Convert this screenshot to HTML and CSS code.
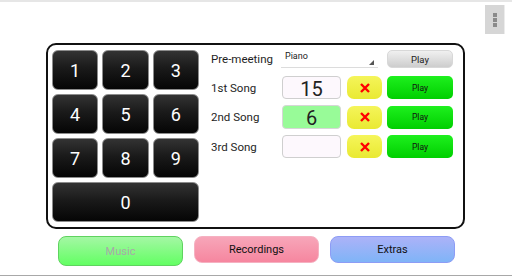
FILE: index.html
```html
<!DOCTYPE html>
<html lang="en">
<head>
  <meta charset="UTF-8">
  <meta name="viewport" content="width=device-width, initial-scale=1.0">
  <title>Meeting Music</title>
  <link rel="stylesheet" href="styles.css">
</head>
<body>
  <div class="screen">
    <div class="top-bar">
      <div class="menu-btn">
        <span></span><span></span><span></span>
      </div>
    </div>

    <div class="panel">
      <div class="keypad">
        <button class="key">1</button>
        <button class="key">2</button>
        <button class="key">3</button>
        <button class="key">4</button>
        <button class="key">5</button>
        <button class="key">6</button>
        <button class="key">7</button>
        <button class="key">8</button>
        <button class="key">9</button>
        <button class="key key-zero">0</button>
      </div>

      <div class="songs">
        <div class="row row-pre">
          <span class="label">Pre-meeting</span>
          <div class="spinner">Piano</div>
          <button class="play play-gray">Play</button>
        </div>
        <div class="row row-1">
          <span class="label">1st Song</span>
          <div class="song-input">15</div>
          <button class="clear"><svg width="10" height="10" viewBox="0 0 10 10"><path d="M1 1L9 9M9 1L1 9" stroke="#f00" stroke-width="2.4"/></svg></button>
          <button class="play">Play</button>
        </div>
        <div class="row row-2">
          <span class="label">2nd Song</span>
          <div class="song-input selected">6</div>
          <button class="clear"><svg width="10" height="10" viewBox="0 0 10 10"><path d="M1 1L9 9M9 1L1 9" stroke="#f00" stroke-width="2.4"/></svg></button>
          <button class="play">Play</button>
        </div>
        <div class="row row-3">
          <span class="label">3rd Song</span>
          <div class="song-input"></div>
          <button class="clear"><svg width="10" height="10" viewBox="0 0 10 10"><path d="M1 1L9 9M9 1L1 9" stroke="#f00" stroke-width="2.4"/></svg></button>
          <button class="play">Play</button>
        </div>
      </div>
    </div>

    <div class="tabs">
      <button class="tab tab-music">Music</button>
      <button class="tab tab-rec">Recordings</button>
      <button class="tab tab-extras">Extras</button>
    </div>
  </div>
</body>
</html>
```

FILE: styles.css
```css
body {
  margin: 0;
  padding: 0;
  font-family: Roboto, "Liberation Sans", sans-serif;
  background-color: #fff;
}
button {
  font-family: Roboto, "Liberation Sans", sans-serif;
  padding: 0;
  cursor: pointer;
}
.screen {
  width: 512px;
  height: 276px;
  box-sizing: border-box;
  border-top: 2px solid #e6e6e6;
  border-bottom: 1px solid #a8a8a8;
  display: flex;
  flex-direction: column;
}
.top-bar {
  height: 41px;
  display: flex;
  justify-content: flex-end;
  align-items: flex-start;
}
.menu-btn {
  width: 19px;
  height: 29px;
  margin-top: 3px;
  margin-right: 7px;
  background-color: #d6d6d6;
  border-right: 1px solid #ececec;
  display: flex;
  flex-direction: column;
  align-items: center;
  justify-content: center;
  gap: 1px;
}
.menu-btn span {
  width: 4px;
  height: 4px;
  background-color: #8a8a8a;
}
/* main panel */
.panel {
  width: 419px;
  height: 186px;
  margin-left: 46px;
  box-sizing: border-box;
  border: 2px solid #111;
  border-radius: 10px;
  padding: 5px 6px 0 4px;
  display: flex;
}
.keypad {
  width: 147px;
  flex-shrink: 0;
  display: grid;
  grid-template-columns: repeat(3, 1fr);
  grid-template-rows: repeat(4, 40px);
  column-gap: 4px;
  row-gap: 4px;
}
.key {
  background: linear-gradient(#333 0%, #1a1a1a 45%, #050505 100%);
  border: 1px solid #8c8c8c;
  border-radius: 6px;
  color: #fff;
  font-size: 18px;
}
.key-zero {
  grid-column: 1 / 4;
}
.songs {
  margin-left: 12px;
  flex: 1;
}
.row {
  display: flex;
  align-items: center;
}
.row-pre {
  height: 18px;
}
.row-1 {
  height: 23px;
  margin-top: 8px;
}
.row-2 {
  height: 24px;
  margin-top: 6px;
}
.row-3 {
  height: 23px;
  margin-top: 6px;
}
.label {
  width: 71px;
  flex-shrink: 0;
  font-size: 11.5px;
  color: #1e1e1e;
}
.spinner {
  width: 97px;
  height: 18px;
  margin-left: -1px;
  margin-right: 4px;
  box-sizing: border-box;
  padding: 1px 0 0 4px;
  font-size: 9px;
  color: #222;
  border-bottom: 1px solid #dcdcdc;
  position: relative;
}
.spinner::after {
  content: "";
  position: absolute;
  right: 4px;
  bottom: 2px;
  border-left: 5px solid transparent;
  border-bottom: 5px solid #555;
}
.song-input {
  width: 59px;
  height: 100%;
  box-sizing: border-box;
  border: 1px solid #cfcfcf;
  border-radius: 4px;
  background-color: #fdf8fd;
  font-size: 20px;
  color: #222;
  text-align: center;
  line-height: 24px;
}
.song-input.selected {
  background-color: #98fb98;
  border-color: #d6d6d6;
}
.clear {
  width: 35px;
  height: 23px;
  margin-left: 6px;
  border: none;
  border-radius: 7px;
  background: linear-gradient(#f5f55a, #e9e932);
  display: flex;
  align-items: center;
  justify-content: center;
}
.play {
  width: 66px;
  height: 23px;
  margin-left: 5px;
  border: none;
  border-radius: 5px;
  background: linear-gradient(#1ef01e, #00cf00);
  color: #111;
  font-size: 8.5px;
}
.play-gray {
  height: 18px;
  background: linear-gradient(#f0f0f0, #cdcdcd);
  border: 1px solid #d8d8d8;
  font-size: 9.5px;
  color: #222;
}
/* bottom tabs */
.tabs {
  display: flex;
  gap: 11px;
  margin-left: 58px;
  margin-top: 7px;
}
.tab {
  width: 125px;
  height: 27px;
  border-radius: 8px;
  font-size: 11px;
  color: #111;
  border: 1px solid transparent;
}
.tab-music {
  height: 30px;
  background: linear-gradient(#a4f7a4, #63ff63);
  border-color: #5fd35f;
  color: #a9a9a9;
}
.tab-rec {
  background: linear-gradient(#f7a6b9, #f6869f);
  border-color: #f5b1c1;
}
.tab-extras {
  background: linear-gradient(#acb2f8, #7fb4f7);
  border-color: #8d9cf5;
}
```
